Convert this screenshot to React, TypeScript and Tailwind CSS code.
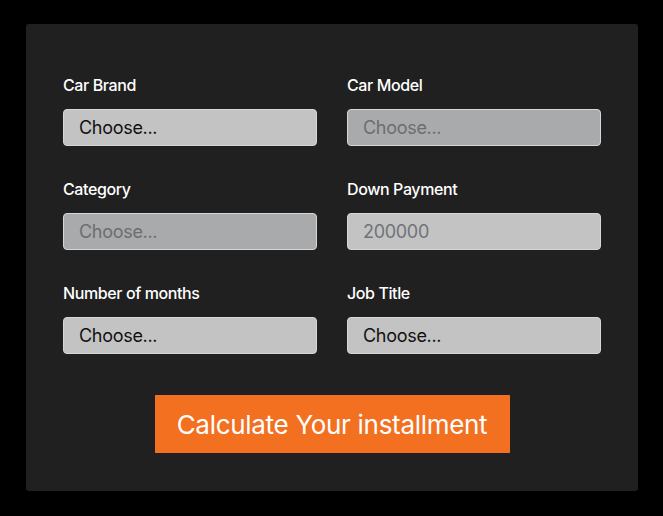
import React from "react";

const font = { fontFamily: "Inter, 'Liberation Sans', sans-serif" };

function Field({ label, value, disabled, placeholder }: { label: string; value: string; disabled?: boolean; placeholder?: boolean }) {
  return (
    <div className="flex flex-col">
      <label className="text-[16px] leading-[20px] font-medium text-white tracking-[-0.4px] mb-[14px]">{label}</label>
      <div
        className={
          "h-[37px] rounded-[4px] border border-[#d6d6d6] flex items-center pl-[15px] text-[18px] tracking-[-0.3px] " +
          (disabled ? "bg-[#a9aaab] text-[#6c6e70] border-[#b5b6b7]" : placeholder ? "bg-[#c3c3c3] text-[#6f7378]" : "bg-[#c3c3c3] text-[#111]")
        }
      >
        {value}
      </div>
    </div>
  );
}

export default function App() {
  return (
    <div className="w-[663px] h-[516px] bg-black pt-[24px] pl-[26px]" style={font}>
      <div className="w-[612px] h-[467px] bg-[#202020] rounded-[3px] px-[37px] pt-[51px]">
        <div className="grid grid-cols-2 gap-x-[30px] gap-y-[33px]">
          <Field label="Car Brand" value="Choose..." />
          <Field label="Car Model" value="Choose..." disabled />
          <Field label="Category" value="Choose..." disabled />
          <Field label="Down Payment" value="200000" placeholder />
          <Field label="Number of months" value="Choose..." />
          <Field label="Job Title" value="Choose..." />
        </div>
        <div className="flex justify-center mt-[41px]">
          <button className="w-[355px] h-[58px] bg-[#f37021] text-white text-[26px] tracking-[-0.3px]">
            Calculate Your installment
          </button>
        </div>
      </div>
    </div>
  );
}
